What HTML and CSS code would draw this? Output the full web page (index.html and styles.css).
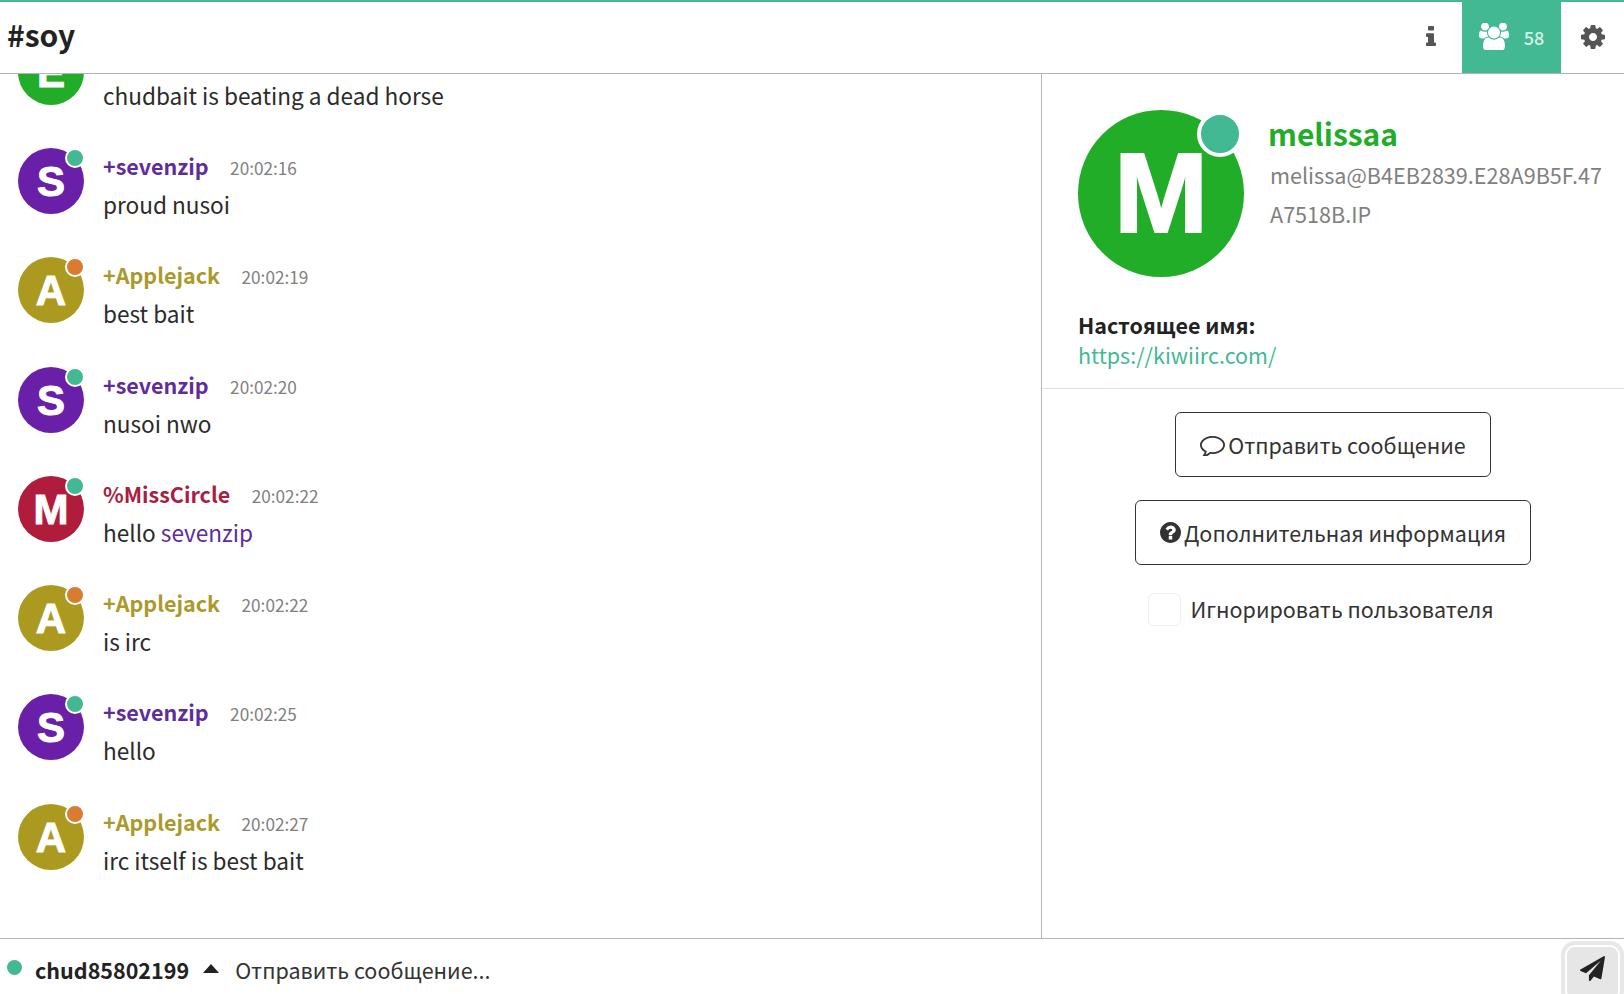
FILE: index.html
```html
<!DOCTYPE html>
<html lang="ru">
<head>
<meta charset="utf-8">
<title>#soy</title>
<link rel="stylesheet" href="styles.css">
</head>
<body>
<div class="app">
  <header class="topbar">
    <h1 class="channel">#soy</h1>
    <div class="tools">
      <button class="tool tool-info"><svg class="ic ic-info" viewBox="512 128 704 1472" preserveAspectRatio="none"><path d="M1216 1344v128q0 26-19 45t-45 19h-512q-26 0-45-19t-19-45v-128q0-26 19-45t45-19h64v-384h-64q-26 0-45-19t-19-45v-128q0-26 19-45t45-19h384q26 0 45 19t19 45v576h64q26 0 45 19t19 45zm-128-1152v192q0 26-19 45t-45 19h-256q-26 0-45-19t-19-45v-192q0-26 19-45t45-19h256q26 0 45 19t19 45z"/></svg></button>
      <button class="tool tool-users"><svg class="ic ic-users" viewBox="0 128 1920 1536"><path d="M593 896q-162 5-265 128h-134q-82 0-138-40.500t-56-118.500q0-353 124-353 6 0 43.500 21t97.500 42.500 119 21.500q67 0 133-23-5 37-5 66 0 139 81 256zm1071 637q0 120-73 189.500t-194 69.500h-874q-121 0-194-69.500t-73-189.500q0-53 3.500-103.500t14-109 26.500-108.500 43-97.500 62-81 85.500-53.500 111.500-20q10 0 43 21.500t73 48 107 48 135 21.500 135-21.500 107-48 73-48 43-21.500q61 0 111.500 20t85.500 53.500 62 81 43 97.500 26.500 108.500 14 109 3.500 103.500zm-1024-1277q0 106-75 181t-181 75-181-75-75-181 75-181 181-75 181 75 75 181zm704 384q0 159-112.500 271.500t-271.500 112.500-271.500-112.500-112.500-271.500 112.500-271.500 271.500-112.500 271.500 112.500 112.500 271.500zm576 225q0 78-56 118.500t-138 40.500h-134q-103-123-265-128 81-117 81-256 0-29-5-66 66 23 133 23 59 0 119-21.500t97.500-42.500 43.500-21q124 0 124 353zm-128-609q0 106-75 181t-181 75-181-75-75-181 75-181 181-75 181 75 75 181z"/></svg><span class="count">58</span></button>
      <button class="tool tool-cog"><svg class="ic ic-cog" viewBox="128 128 1536 1536"><path d="M1152 896q0-106-75-181t-181-75-181 75-75 181 75 181 181 75 181-75 75-181zm512-109v222q0 12-8 23t-20 13l-185 28q-19 54-39 91 35 50 107 138 10 12 10 25t-9 23q-27 37-99 108t-94 71q-12 0-26-9l-138-108q-44 23-91 38-16 136-29 186-7 27-36 27h-222q-14 0-24.500-8.500t-11.500-21.500l-28-184q-49-16-90-37l-141 107q-10 9-25 9-14 0-25-11-126-114-165-168-7-10-7-23 0-12 8-23 15-21 51-66.500t54-70.500q-27-50-41-99l-183-27q-13-2-21-12.500t-8-23.500v-222q0-12 8-23t19-13l186-28q14-46 39-92-40-57-107-138-10-12-10-24 0-10 9-23 26-36 98.500-107.500t94.500-71.500q13 0 26 10l138 107q44-23 91-38 16-136 29-186 7-27 36-27h222q14 0 24.500 8.500t11.500 21.500l28 184q49 16 90 37l142-107q9-9 24-9 13 0 25 10 129 119 165 170 7 8 7 22 0 12-8 23-15 21-51 66.500t-54 70.500q26 50 41 98l183 28q13 2 21 12.500t8 23.500z"/></svg></button>
    </div>
  </header>
  <div class="middle">
    <main class="messages">
      <div class="msg"><div class="avatar av-green">E</div><div class="body"><div class="meta"><span class="nick nick-green">+Ellie</span><span class="time">20:02:14</span></div><div class="text">chudbait is beating a dead horse</div></div></div>
      <div class="msg"><div class="avatar av-purple">S<i class="dot dot-on"></i></div><div class="body"><div class="meta"><span class="nick nick-purple">+sevenzip</span><span class="time">20:02:16</span></div><div class="text">proud nusoi</div></div></div>
      <div class="msg"><div class="avatar av-olive">A<i class="dot dot-away"></i></div><div class="body"><div class="meta"><span class="nick nick-olive">+Applejack</span><span class="time">20:02:19</span></div><div class="text">best bait</div></div></div>
      <div class="msg"><div class="avatar av-purple">S<i class="dot dot-on"></i></div><div class="body"><div class="meta"><span class="nick nick-purple">+sevenzip</span><span class="time">20:02:20</span></div><div class="text">nusoi nwo</div></div></div>
      <div class="msg"><div class="avatar av-red">M<i class="dot dot-on"></i></div><div class="body"><div class="meta"><span class="nick nick-red">%MissCircle</span><span class="time">20:02:22</span></div><div class="text">hello <span class="mention">sevenzip</span></div></div></div>
      <div class="msg"><div class="avatar av-olive">A<i class="dot dot-away"></i></div><div class="body"><div class="meta"><span class="nick nick-olive">+Applejack</span><span class="time">20:02:22</span></div><div class="text">is irc</div></div></div>
      <div class="msg"><div class="avatar av-purple">S<i class="dot dot-on"></i></div><div class="body"><div class="meta"><span class="nick nick-purple">+sevenzip</span><span class="time">20:02:25</span></div><div class="text">hello</div></div></div>
      <div class="msg"><div class="avatar av-olive">A<i class="dot dot-away"></i></div><div class="body"><div class="meta"><span class="nick nick-olive">+Applejack</span><span class="time">20:02:27</span></div><div class="text">irc itself is best bait</div></div></div>
    </main>
    <aside class="panel">
      <section class="profile">
        <div class="who">
          <div class="big-avatar">M<i class="big-dot"></i></div>
          <div class="who-text">
            <div class="who-nick">melissaa</div>
            <div class="who-host">melissa@B4EB2839.E28A9B5F.47A7518B.IP</div>
          </div>
        </div>
        <div class="realname-label">Настоящее имя:</div>
        <a class="realname" href="#">https://kiwiirc.com/</a>
      </section>
      <section class="actions">
        <button class="btn"><svg class="ic ic-comment" viewBox="0 128 1792 1536"><path d="M896 384q-204 0-381.500 69.500t-282 187.500-104.500 255q0 112 71.500 213.500t201.500 175.500l87 50-27 96q-24 91-70 172 152-63 275-171l43-38 57 6q69 8 130 8 204 0 381.500-69.500t282-187.500 104.500-255-104.500-255-282-187.500-381.500-69.500zm896 512q0 174-120 321.500t-326 233-450 85.500q-70 0-145-8-198 175-460 242-49 14-114 22h-5q-15 0-27-10.500t-16-27.500v-1q-3-4-.5-12t2-10 4.500-9.500l6-9 7-8.500 8-9q7-8 31-34.500t34.500-38 31-39.500 32.500-51 27-59 26-76q-157-89-247.500-220t-90.500-281q0-174 120-321.500t326-233 450-85.500 450 85.500 326 233 120 321.500z"/></svg>Отправить сообщение</button>
        <button class="btn"><svg class="ic ic-question" viewBox="128 128 1536 1536"><path d="M1024 1376v-192q0-14-9-23t-23-9h-192q-14 0-23 9t-9 23v192q0 14 9 23t23 9h192q14 0 23-9t9-23zm256-672q0-88-55.500-163t-138.500-116-170-41q-243 0-371 213-15 24 8 42l132 100q7 6 19 6 16 0 25-12 53-68 86-92 34-24 86-24 48 0 85.500 26t37.500 59q0 38-20 61t-68 45q-63 28-115.500 86.500t-52.500 125.500v36q0 14 9 23t23 9h192q14 0 23-9t9-23q0-19 21.500-49.500t54.500-49.500q32-18 49-28.500t46-35 44.500-48 28-60.500 12.500-81zm384 192q0 209-103 385.500t-279.500 279.500-385.500 103-385.500-103-279.500-279.500-103-385.500 103-385.500 279.500-279.500 385.500-103 385.500 103 279.500 279.500 103 385.500z"/></svg>Дополнительная информация</button>
        <label class="ignore"><span class="check"></span>Игнорировать пользователя</label>
      </section>
    </aside>
  </div>
  <footer class="composer">
    <i class="status"></i>
    <span class="me">chud85802199</span>
    <i class="caret"></i>
    <span class="placeholder">Отправить сообщение...</span>
    <button class="send"><svg class="ic ic-send" viewBox="0 0 1792 1792"><path d="M1764 11q33 24 27 64l-256 1536q-5 29-32 45-14 8-31 8-11 0-24-5l-453-185-242 295q-18 23-49 23-13 0-22-4-19-7-30.500-23.500t-11.500-36.500v-349l864-1059-1069 925-395-162q-37-14-40-55-2-40 32-59l1664-960q15-9 32-9 20 0 36 11z"/></svg></button>
  </footer>
</div>
</body>
</html>
```

FILE: styles.css
```css
* { box-sizing: border-box; }
html, body { margin: 0; height: 100%; }
body {
  font-family: "Noto Sans CJK SC", "Noto Sans", sans-serif;
  color: #222;
  background: #fff;
  overflow: hidden;
}
button { font: inherit; color: inherit; background: none; border: 0; padding: 0; }
.ic { display: block; fill: currentColor; }

.app { display: flex; flex-direction: column; height: 994px; }

.topbar {
  flex: none;
  height: 74px;
  display: flex;
  justify-content: space-between;
  border-top: 2px solid #42b992;
  border-bottom: 1px solid #b5b5b5;
}
.channel {
  margin: 0;
  padding: 0 0 0 7px;
  font-size: 30px;
  line-height: 64px;
  font-weight: 700;
  color: #222;
}
.tools { display: flex; margin-top: -2px; }
.tool { display: flex; align-items: center; justify-content: center; height: 73px; color: #555; }
.tool-info { width: 49px; padding-right: 15px; }
.tool-users { width: 99px; background: #42b992; color: #fff; gap: 15px; }
.tool-cog { width: 63px; }
.ic-info { width: 11px; height: 21px; }
.ic-users { width: 30px; height: 27px; }
.ic-cog { width: 24px; height: 24px; }
.count { font-size: 18px; font-weight: 500; color: #d6f3e8; line-height: 1; }

.middle { flex: 1; min-height: 0; display: flex; }

.messages {
  flex: none;
  width: 1042px;
  border-right: 1px solid #b5b5b5;
  display: flex;
  flex-direction: column;
  justify-content: flex-end;
  overflow: hidden;
  padding: 0 0 25px 18px;
}
.msg { flex: none; height: 109.27px; display: flex; gap: 19px; }
.avatar {
  position: relative;
  flex: none;
  width: 66px;
  height: 66px;
  border-radius: 50%;
  color: #fff;
  font: 700 42px/68px "Liberation Sans", sans-serif;
  -webkit-text-stroke: 1px #fff;
  text-align: center;
}
.av-green { background: #22ad29; }
.av-purple { background: #6a1fa8; }
.av-olive { background: #ab9a1f; }
.av-red { background: #b01c3c; }
.dot {
  position: absolute;
  top: 0;
  right: -1px;
  width: 20px;
  height: 20px;
  border-radius: 50%;
  border: 2px solid #fff;
}
.dot-on { background: #42b992; }
.dot-away { background: #d97b31; }

.body { padding-top: 1px; }
.meta { display: flex; align-items: baseline; gap: 21.5px; height: 38px; }
.nick { font-size: 21.5px; line-height: 34px; font-weight: 700; }
.nick-green { color: #22ad29; }
.nick-purple { color: #5f2c9c; }
.nick-olive { color: #ab9a2b; }
.nick-red { color: #a81f42; }
.time { font-size: 17.2px; line-height: 34px; color: #808080; }
.text { font-size: 22.6px; line-height: 36px; color: #2b2b2b; }
.mention { color: #5f2c9c; }

.panel { flex: 1; min-width: 0; }
.profile { padding: 36px 20px 10px 36px; border-bottom: 1px solid #e0e0e0; height: 315px; }
.who { display: flex; gap: 24px; }
.big-avatar {
  position: relative;
  flex: none;
  width: 166px;
  height: 167px;
  border-radius: 50%;
  background: #22ad29;
  color: #fff;
  font: 700 113px/167px "Liberation Sans", sans-serif;
  -webkit-text-stroke: 2px #fff;
  text-align: center;
}
.big-dot {
  position: absolute;
  top: 1px;
  right: 1px;
  width: 46px;
  height: 46px;
  border-radius: 50%;
  background: #42b992;
  border: 4px solid #fff;
}
.who-text { min-width: 0; padding-top: 3px; }
.who-nick { font-size: 30px; line-height: 40px; font-weight: 700; color: #22ad29; }
.who-host { font-size: 21.6px; line-height: 38.5px; color: #808080; word-break: break-all; padding: 3px 0 0 2px; }
.realname-label { margin-top: 32px; font-size: 21.5px; line-height: 32px; font-weight: 700; color: #222; }
.realname { display: block; font-size: 21.5px; line-height: 28px; color: #42b992; text-decoration: none; }

.actions { display: flex; flex-direction: column; align-items: center; padding-top: 23px; gap: 23px; }
.btn {
  display: flex;
  align-items: center;
  gap: 3px;
  height: 65px;
  padding: 0 24px;
  border: 1px solid #333;
  border-radius: 6px;
  font-size: 21.5px;
  line-height: 32px;
  color: #333;
}
.ic-comment { width: 25px; height: 22px; }
.ic-question { width: 21px; height: 21px; }
.ignore { display: flex; align-items: center; gap: 9px; margin: 4px 24px 0 0; font-size: 21.5px; line-height: 34px; color: #333; }
.check { width: 33px; height: 33px; border: 1px solid #eee; border-radius: 6px; background: #fff; }

.composer {
  flex: none;
  height: 56px;
  display: flex;
  align-items: center;
  border-top: 1px solid #b5b5b5;
  overflow: hidden;
  padding: 7px 0 0 7px;
}
.status { width: 15px; height: 15px; border-radius: 50%; background: #42b992; margin: -6px 13px 0 0; }
.me { font-size: 21.5px; font-weight: 700; line-height: 34px; }
.caret {
  width: 0;
  height: 0;
  margin: -4px 16px 0 14px;
  border-left: 8px solid transparent;
  border-right: 8px solid transparent;
  border-bottom: 9px solid #222;
}
.placeholder { font-size: 21.5px; line-height: 34px; color: #333; }
.send {
  flex: none;
  align-self: flex-start;
  margin: -5px 0 0 auto;
  width: 63px;
  height: 64px;
  display: flex;
  align-items: center;
  justify-content: center;
  padding-bottom: 10px;
  background: #e6e6e6;
  border-radius: 14px;
  border: 4px solid #e8e8e8;
  outline: 2px solid #fff;
  outline-offset: -6px;
}
.ic-send { width: 25px; height: 25px; color: #222; }
```
